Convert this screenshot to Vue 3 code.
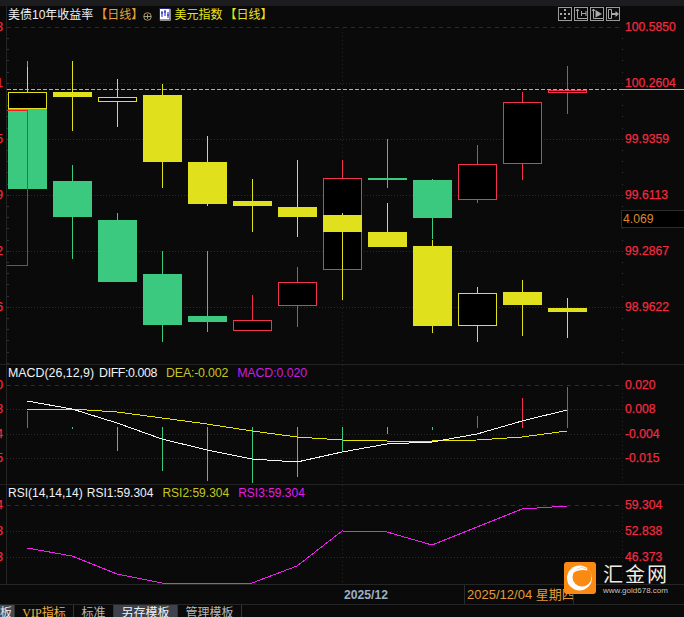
<script setup>
const RED = '#f23350'
const GREEN = '#3ac97f'
const YELLOW = '#e0e01c'

// page coordinates: [centre x, wick top, wick bottom, body top, body bottom, hollow]
const bottomSeries = [
  [27, 61, 110, 109, 189, false, GREEN],
  [72, 165, 259, 181, 217, false, GREEN],
  [117, 213, 221, 220, 282, false, GREEN],
  [162, 251, 342, 274, 325, false, GREEN],
  [207, 251, 332, 316, 322, false, GREEN],
  [252, 295, 321, 320, 331, true, RED],
  [297, 267, 327, 282, 306, true, RED],
  [342, 160, 179, 178, 270, true, RED],
  [387, 139, 188, 178, 180, false, GREEN],
  [432, 179, 239, 180, 218, false, GREEN],
  [477, 145, 203, 164, 200, true, RED],
  [522, 92, 180, 102, 164, true, RED],
  [567, 66, 114, 90, 93, true, RED]
]
const topSeries = [
  [27, 67, 93, 92, 109, true, YELLOW],
  [72, 61, 131, 92, 97, false, YELLOW],
  [117, 79, 127, 97, 102, true, YELLOW],
  [162, 84, 188, 95, 162, false, YELLOW],
  [207, 136, 206, 162, 204, false, YELLOW],
  [252, 179, 232, 201, 206, false, YELLOW],
  [297, 160, 237, 207, 217, false, YELLOW],
  [342, 213, 300, 215, 232, false, YELLOW],
  [387, 203, 233, 232, 247, false, YELLOW],
  [432, 240, 333, 246, 326, false, YELLOW],
  [477, 287, 342, 293, 326, true, YELLOW],
  [522, 280, 336, 292, 305, false, YELLOW],
  [567, 298, 338, 308, 312, false, YELLOW]
]
const candles = [...bottomSeries, ...topSeries].map(([x, wt, wb, bt, bb, hollow, color]) => ({
  x, wt, wb, bt, bb, hollow, color
}))

const mainGrid = [83, 139, 195, 251, 307]
const mainLabels = [
  ['100.5850', '8', 27], ['100.2604', '1', 83], ['99.9359', '5', 139],
  ['99.6113', '9', 195], ['99.2867', '2', 251], ['98.9622', '6', 307]
]
const ticks = Array.from({ length: 30 }, (_, i) => Math.round(38 + i * 11.2))

const macdBars = [
  [27, 411, 428, RED], [72, 427, 429, GREEN], [117, 427, 451, GREEN], [162, 427, 471, GREEN],
  [207, 427, 481, GREEN], [252, 427, 483, GREEN], [297, 427, 477, GREEN], [342, 427, 451, GREEN],
  [387, 427, 434, GREEN], [432, 427, 430, GREEN], [477, 416, 428, RED], [522, 398, 428, RED],
  [567, 387, 428, RED]
]
const diff = '27,401 72,409 117,423 162,439 207,450 252,459 297,462 342,452 387,444 432,442 477,434 522,421 567,410'
const dea = '27,409 72,409 117,412 162,418 207,424 252,431 297,437 342,440 387,441 432,441 477,440 522,437 567,431'
const macdLabels = [['0.020', '0', 385], ['0.008', '8', 409], ['-0.004', '4', 434], ['-0.015', '5', 458]]

const rsi = '27,548 72,556 117,574 162,583 207,583 252,583 297,566 342,531 387,532 432,545 477,527 522,509 567,506'
const rsiLabels = [['59.304', '4', 505], ['52.838', '8', 531], ['46.373', '3', 557]]
</script>

<template>
  <div class="page">
    <div class="topbar"></div>

    <section class="panel">
      <svg class="canvas" width="684" height="358" viewBox="0 6 684 358">
        <line class="grid-dash" x1="7" x2="622" y1="27.5" y2="27.5" />
        <line v-for="y in mainGrid" :key="y" class="grid-dot" x1="7" x2="622" :y1="y + 0.5" :y2="y + 0.5" />
        <line class="grid-vert" x1="342.5" x2="342.5" y1="28" y2="364" />
        <line class="axis" x1="6.5" x2="6.5" y1="6" y2="364" />
        <template v-for="t in ticks" :key="t">
          <rect class="tick" x="7" :y="t" width="2" height="1" />
          <rect class="tick" x="622" :y="t" width="1" height="1" />
        </template>

        <g v-for="(c, i) in candles" :key="i" shape-rendering="crispEdges">
          <rect :x="c.x" :y="c.wt" width="1" :height="c.wb - c.wt" :fill="c.color" />
          <rect
            v-if="c.hollow"
            :x="c.x - 18.5"
            :y="c.bt + 0.5"
            width="38"
            :height="c.bb - c.bt - 1"
            fill="#000"
            :stroke="c.color"
          />
          <rect v-else :x="c.x - 19" :y="c.bt" width="39" :height="c.bb - c.bt" :fill="c.color" />
        </g>
        <path d="M7 110.5H27.5V265.5H7" fill="none" stroke="#f5182e" shape-rendering="crispEdges" />

        <line class="price-dash" x1="7" x2="620" y1="89.5" y2="89.5" />
        <line class="price-solid" x1="619" x2="684" y1="89.5" y2="89.5" />

        <template v-for="l in mainLabels" :key="l[0]">
          <text class="num" x="625" :y="l[2] + 4">{{ l[0] }}</text>
          <text class="num" x="3" text-anchor="end" :y="l[2] + 4">{{ l[1] }}</text>
        </template>
      </svg>

      <header class="legend title">
        <span class="white">美债10年收益率</span>
        <span class="orange bracket">【日线】</span>
        <svg class="add" width="9" height="9" viewBox="0 0 10 10">
          <circle cx="5" cy="5" r="4.2" fill="none" stroke="#c9a25a" />
          <path d="M1 5H9M5 2.5V7.5" stroke="#9fb39a" />
        </svg>
        <svg class="badge" width="12" height="13" viewBox="0 0 12 13">
          <rect x="0.5" y="0.5" width="10.5" height="11.5" fill="#fff" stroke="#23237a" />
          <path d="M3 3V9M6 2V8M9 4V10" stroke="#1414c8" />
          <path d="M2 5H4M5 4H7M8 7H10" stroke="#1414c8" />
          <path d="M11.5 1V12.5H1" fill="none" stroke="#8b8b8b" />
        </svg>
        <span class="yellow">美元指数</span>
        <span class="yellow bracket">【日线】</span>
      </header>

      <div class="tools">
        <button class="tool" aria-label="move">
          <svg width="12" height="12" viewBox="0 0 12 12"><path d="M5 1H7V3H5ZM5 9H7V11H5ZM1 5H3V7H1ZM9 5H11V7H9ZM5 5H7V7H5Z" fill="#a8a8a8" /></svg>
        </button>
        <button class="tool" aria-label="zoom time">
          <svg width="12" height="12" viewBox="0 0 12 12"><path d="M2.5 1V10.5H12M1 3L2.5 1L4 3M6.5 3V8M11 3V8M6.5 5.5H11" fill="none" stroke="#a8a8a8" /></svg>
        </button>
        <button class="tool" aria-label="play">
          <svg width="12" height="12" viewBox="0 0 12 12"><path d="M2.5 1V10.5H12M1 3L2.5 1L4 3" fill="none" stroke="#a8a8a8" /><path d="M4.5 2L11 6L4.5 9.5Z" fill="#a8a8a8" /></svg>
        </button>
        <button class="tool" aria-label="to end">
          <svg width="12" height="12" viewBox="0 0 12 12"><path d="M1.5 1.5H4.5V10.5H1.5Z" fill="none" stroke="#a8a8a8" /><path d="M5 5H8.5V3L12 6L8.5 9V7H5Z" fill="#a8a8a8" /></svg>
        </button>
      </div>

      <div class="price-box">4.069</div>
    </section>

    <section class="panel macd">
      <svg class="canvas" width="684" height="119" viewBox="0 365 684 119">
        <line class="grid-dash" x1="7" x2="622" y1="385.5" y2="385.5" />
        <line v-for="y in [409, 434, 458]" :key="y" class="grid-dot" x1="7" x2="622" :y1="y + 0.5" :y2="y + 0.5" />
        <line class="grid-vert" x1="342.5" x2="342.5" y1="365" y2="484" />
        <line class="grid-vert" x1="622.5" x2="622.5" y1="385" y2="484" />
        <line class="axis" x1="6.5" x2="6.5" y1="365" y2="484" />
        <rect
          v-for="b in macdBars"
          :key="b[0]"
          :x="b[0]"
          :y="b[1]"
          width="1"
          :height="b[2] - b[1]"
          :fill="b[3]"
        />
        <polyline :points="dea" class="line" stroke="#e6e600" />
        <polyline :points="diff" class="line" stroke="#f6f6f6" />
        <template v-for="l in macdLabels" :key="l[0]">
          <text class="num" x="625" :y="l[2] + 4">{{ l[0] }}</text>
          <text class="num" x="3" text-anchor="end" :y="l[2] + 4">{{ l[1] }}</text>
        </template>
      </svg>
      <div class="legend indicator">
        <span class="white">MACD(26,12,9)</span>
        <span class="white diff">DIFF:0.008</span>
        <span class="olive dea">DEA:-0.002</span>
        <span class="purple">MACD:0.020</span>
      </div>
    </section>

    <section class="panel rsi">
      <svg class="canvas" width="684" height="99" viewBox="0 485 684 99">
        <line class="grid-dash" x1="7" x2="622" y1="505.5" y2="505.5" />
        <line v-for="y in [531, 557]" :key="y" class="grid-dot" x1="7" x2="622" :y1="y + 0.5" :y2="y + 0.5" />
        <line class="grid-vert" x1="342.5" x2="342.5" y1="485" y2="584" />
        <line class="grid-vert" x1="622.5" x2="622.5" y1="505" y2="584" />
        <line class="axis" x1="6.5" x2="6.5" y1="485" y2="584" />
        <polyline :points="rsi" class="line" stroke="#ee20ee" />
        <template v-for="l in rsiLabels" :key="l[0]">
          <text class="num" x="625" :y="l[2] + 4">{{ l[0] }}</text>
          <text class="num" x="3" text-anchor="end" :y="l[2] + 4">{{ l[1] }}</text>
        </template>
      </svg>
      <div class="legend indicator rsi-legend">
        <span class="white">RSI(14,14,14)</span>
        <span class="white">RSI1:59.304</span>
        <span class="olive">RSI2:59.304</span>
        <span class="magenta">RSI3:59.304</span>
      </div>
    </section>

    <footer class="time-axis">
      <span class="month">2025/12</span>
      <span class="cursor-date">2025/12/04 星期四</span>
    </footer>

    <nav class="tabs">
      <span class="tab cut">模板</span>
      <span class="tab vip">VIP指标</span>
      <span class="tab std">标准</span>
      <span class="tab active">另存模板</span>
      <span class="tab manage">管理模板</span>
    </nav>

    <div class="brand">
      <svg width="32" height="32" viewBox="0 0 32 32">
        <rect width="32" height="32" rx="3" fill="#fb8a12" />
        <circle cx="15.5" cy="16" r="12.5" fill="#fff" />
        <circle cx="18" cy="15" r="9.5" fill="#fb8a12" />
        <path d="M9 11C11 6 21 4 25 9C20 7 13 8 9 11Z" fill="#fff" />
        <path d="M24 12L28 15C27 9 25 7 23 6Z" fill="#fb8a12" />
      </svg>
      <div class="brand-text">
        <strong class="brand-name">汇金网</strong>
        <span class="brand-url">www.gold678.com</span>
      </div>
    </div>
  </div>
</template>

<style scoped>
.page {
  position: relative;
  width: 684px;
  height: 617px;
  overflow: hidden;
  display: flex;
  flex-direction: column;
  background: #0a0a0a;
  font-family: "Liberation Sans", "Noto Sans CJK SC", sans-serif;
}
.topbar {
  height: 6px;
  flex: none;
  background: #1c1c1e;
}
.panel {
  position: relative;
  flex: none;
  height: 358px;
  border-bottom: 1px solid #222;
}
.panel.macd {
  height: 119px;
  border-bottom: 1px solid #222;
}
.panel.rsi {
  height: 99px;
  border-bottom: 0;
}
.canvas {
  display: block;
}
.grid-dash {
  stroke: #2c2c2c;
  stroke-dasharray: 4 4;
}
.grid-dot {
  stroke: #2a2a2a;
  stroke-dasharray: 1 2;
}
.grid-vert {
  stroke: #242424;
  stroke-dasharray: 1 3;
}
.axis {
  stroke: #242424;
}
.tick {
  fill: #333;
}
.price-dash {
  stroke: #eba640;
  stroke-dasharray: 4 2;
}
.price-solid {
  stroke: #eba640;
}
.line {
  fill: none;
  stroke-width: 1;
  shape-rendering: crispEdges;
}
.num {
  fill: #f02a40;
  stroke: #f02a40;
  stroke-width: 0.25px;
  font-size: 12.2px;
}
.legend {
  position: absolute;
  left: 8px;
  display: flex;
  align-items: center;
  white-space: nowrap;
  font-size: 12.4px;
  line-height: 14px;
}
.title {
  top: 2px;
  font-size: 12px;
}
.bracket {
  margin-left: 2px;
}
.add {
  margin-top: 3px;
}
.badge {
  margin: -1px 3px 0 7px;
}
.indicator {
  top: 1px;
  gap: 5px;
}
.diff {
  letter-spacing: -0.4px;
}
.dea {
  margin-left: 4px;
  letter-spacing: -0.2px;
}
.indicator .purple {
  margin-left: 4px;
  letter-spacing: -0.1px;
}
.rsi-legend {
  font-size: 12px;
  gap: 4px;
}
.rsi-legend .olive,
.rsi-legend .magenta {
  margin-left: 5px;
}
.white {
  color: #f0f2f5;
}
.orange {
  color: #e8a03c;
}
.yellow {
  color: #e6e61e;
}
.olive {
  color: #c4c81e;
}
.purple {
  color: #c81ee0;
}
.magenta {
  color: #e01ee6;
}
.tools {
  position: absolute;
  top: 1px;
  left: 558px;
  display: flex;
  gap: 2px;
}
.tool {
  width: 14px;
  height: 14px;
  padding: 0;
  border: 1px solid #9a9a9a;
  background: transparent;
  display: flex;
  align-items: center;
  justify-content: center;
}
.price-box {
  position: absolute;
  top: 204px;
  left: 621px;
  width: 63px;
  height: 18px;
  box-sizing: border-box;
  border: 1px solid #2c2c2c;
  border-right: 0;
  background: #000;
  color: #df8a2a;
  font-size: 12.2px;
  line-height: 16px;
  padding-left: 1px;
}
.time-axis {
  flex: none;
  height: 19px;
  display: flex;
  align-items: center;
  border-top: 1px solid #262626;
  border-bottom: 1px solid #262626;
  background: #0a0a0a;
}
.month {
  margin-left: 344px;
  color: #9cb0c4;
  font-size: 12.2px;
  font-weight: 700;
}
.cursor-date {
  margin-left: 76px;
  width: 110px;
  height: 100%;
  box-sizing: border-box;
  padding-left: 2px;
  border-left: 1px solid #2a2a2a;
  border-right: 1px solid #2a2a2a;
  color: #e29a36;
  font-size: 13px;
  line-height: 19px;
  white-space: nowrap;
  overflow: hidden;
}
.tabs {
  flex: none;
  height: 14px;
  display: flex;
  font-size: 12px;
  line-height: 16px;
  color: #b8b8b8;
  white-space: nowrap;
}
.tab {
  box-sizing: border-box;
  height: 16px;
  border-right: 1px solid #333;
  text-align: center;
  overflow: hidden;
}
.tab.cut {
  width: 15px;
  padding-right: 2px;
  background: #454a54;
  color: #e8e8e8;
  direction: rtl;
}
.tab.vip {
  width: 59px;
  color: #f0b040;
  font-family: "Liberation Serif", "Noto Sans CJK SC", serif;
}
.tab.std {
  width: 40px;
}
.tab.active {
  width: 64px;
  background: #3d424d;
  color: #f4f4f4;
}
.tab.manage {
  width: 64px;
}
.brand {
  position: absolute;
  left: 564px;
  top: 562px;
  display: flex;
  gap: 7px;
}
.brand-text {
  display: flex;
  flex-direction: column;
  align-items: flex-start;
  text-shadow: 0 0 2px #000;
}
.brand-name {
  color: #f2ece4;
  font-family: "Noto Sans CJK SC", sans-serif;
  font-size: 20px;
  font-weight: 400;
  letter-spacing: 2px;
  line-height: 24px;
}
.brand-url {
  color: #c9c5bf;
  font-size: 8px;
  line-height: 9px;
}
</style>
